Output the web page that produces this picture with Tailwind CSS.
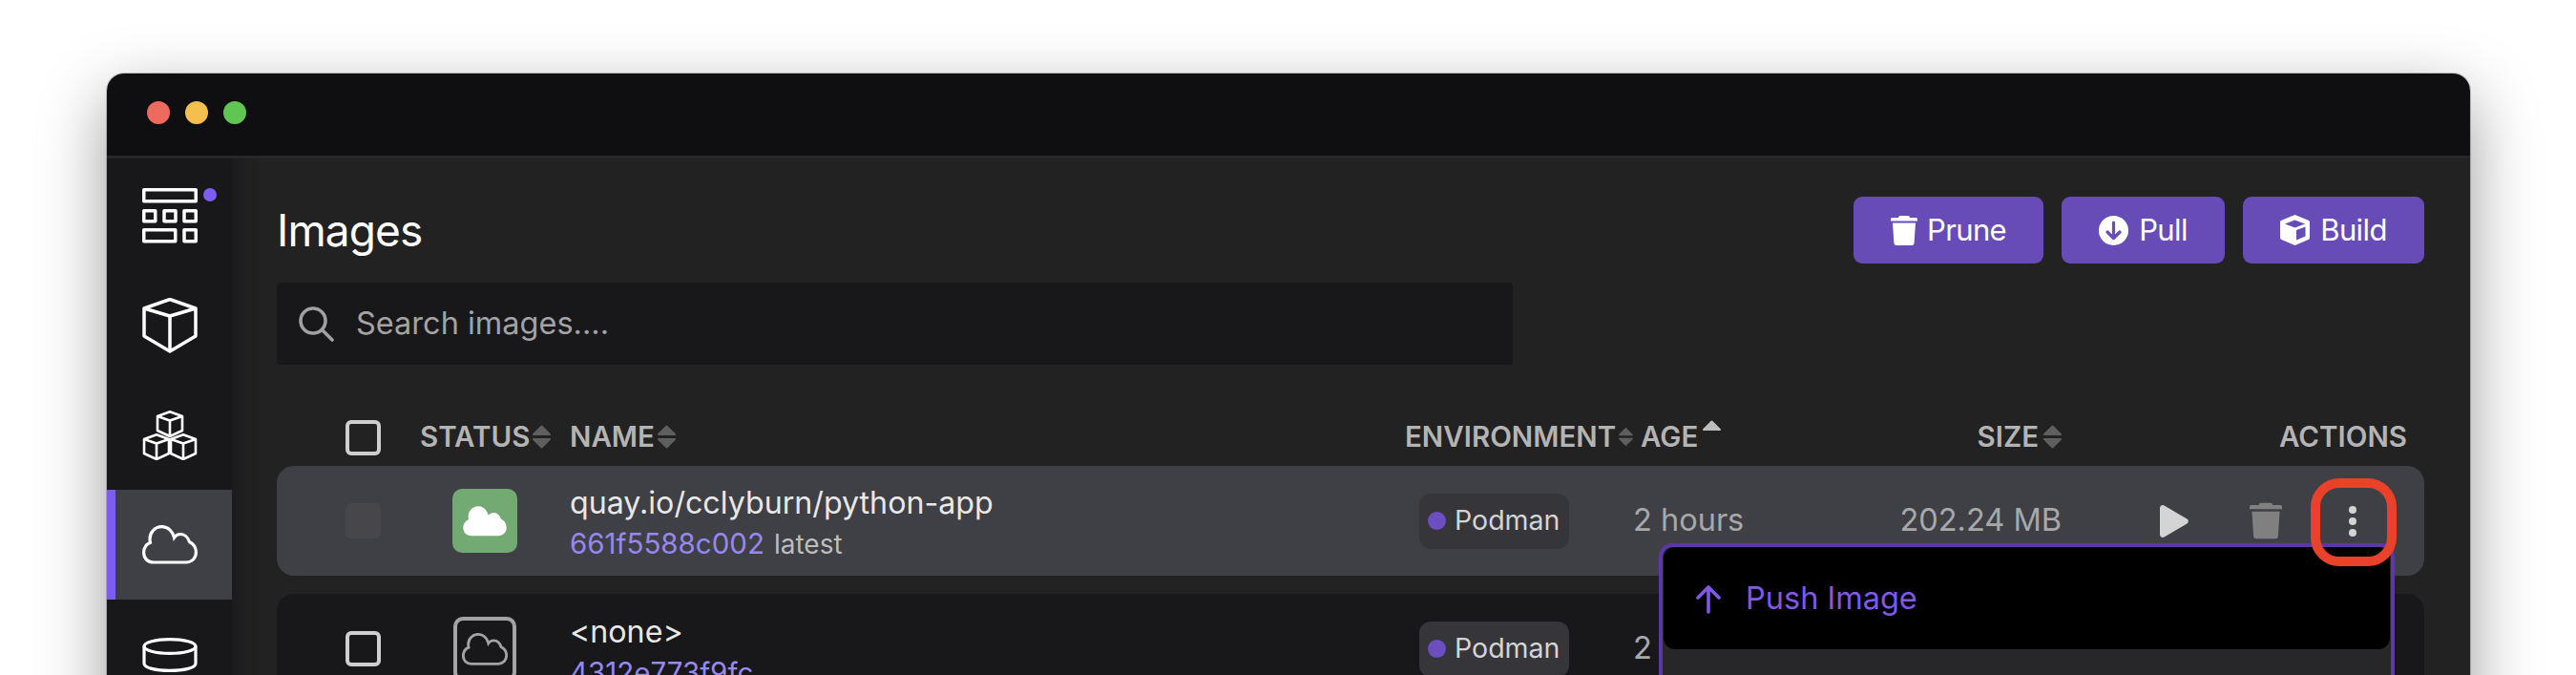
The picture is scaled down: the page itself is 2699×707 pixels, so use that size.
<!DOCTYPE html>
<html lang="en">

<head>
  <meta charset="UTF-8" />
  <title>Podman Desktop - Images</title>
  <script src="https://cdn.jsdelivr.net/npm/@tailwindcss/browser@4"></script>
</head>

<body class="bg-white h-screen overflow-hidden font-[Inter,sans-serif] pt-[77px] pl-[112px]">

  <!-- Window -->
  <div class="w-[2476px] h-[800px] rounded-t-[18px] overflow-hidden shadow-[0_0_0_1px_rgba(0,0,0,0.2),0_24px_70px_rgba(0,0,0,0.4)] flex flex-col">

    <!-- Title bar -->
    <div class="h-[89px] shrink-0 bg-[#0f0f11] border-b-[3px] border-[#27272a] flex items-center gap-[16px] pl-[42px] pb-[4px]">
      <span class="w-[24px] h-[24px] rounded-full bg-[#ee6a5f]"></span>
      <span class="w-[24px] h-[24px] rounded-full bg-[#f5bf4f]"></span>
      <span class="w-[24px] h-[24px] rounded-full bg-[#61c554]"></span>
    </div>

    <div class="flex flex-1">
      <!-- Sidebar -->
      <nav class="w-[131px] shrink-0 bg-[#18181b] flex flex-col pt-[2px]">
        <div class="relative h-[115px] flex items-center justify-center text-white">
          <svg width="58" height="58" viewBox="0 0 58 58" fill="none" stroke="currentColor" stroke-width="3.5" stroke-linejoin="round">
            <rect x="1.75" y="1.75" width="54.5" height="12" />
            <rect x="1.75" y="23.75" width="12" height="11" />
            <rect x="23" y="23.75" width="12" height="11" />
            <rect x="44" y="23.75" width="12.25" height="11" />
            <rect x="1.75" y="43.75" width="33" height="12" />
            <rect x="44" y="43.75" width="12.25" height="12" />
          </svg>
          <span class="absolute left-[101px] top-[29px] w-[14px] h-[14px] rounded-full bg-[#7d5cf0]"></span>
        </div>
        <div class="h-[115px] flex items-center justify-center text-white">
          <svg width="58" height="58" viewBox="0 0 58 58" fill="none" stroke="currentColor" stroke-width="3.5" stroke-linejoin="round">
            <path d="M29 1.500L56 11V40L29 56L2 40V11Z" />
            <path d="M2 11L29 19L56 11M29 19V56" />
          </svg>
        </div>
        <div class="h-[115px] flex items-center justify-center text-white">
          <svg width="58" height="52" viewBox="0 0 58 52" fill="none" stroke="currentColor" stroke-width="2.6" stroke-linejoin="round">
            <g transform="translate(15 0)"><path d="M14 1.300L27 6V21L14 27L1 21V6Z M1 6L14 10.500L27 6M14 10.500V27" /></g>
            <g transform="translate(1 24)"><path d="M14 1.300L27 6V21L14 27L1 21V6Z M1 6L14 10.500L27 6M14 10.500V27" /></g>
            <g transform="translate(29 24)"><path d="M14 1.300L27 6V21L14 27L1 21V6Z M1 6L14 10.500L27 6M14 10.500V27" /></g>
          </svg>
        </div>
        <div class="h-[115px] flex items-center justify-center text-white bg-[#3f3f46] border-l-[9px] border-[#7d5cf0] pr-[9px]">
          <svg width="58" height="41" viewBox="0 0 58 41" fill="none" stroke="currentColor" stroke-width="3.2">
            <path d="M12 39H46C52 39 56.400 34.500 56.400 28.500C56.400 23.500 53.500 19.500 49.500 17.500C48 12.500 44 9.500 40 9.500C37.500 9.500 35 10.800 33.500 13C32 6.500 27 1.600 20.500 1.600C13 1.600 8 8 8 14.500C8 15.800 8.200 17 8.500 18.200C4.300 20 1.600 24 1.600 28.800C1.600 35 6 39 12 39Z" />
          </svg>
        </div>
        <div class="h-[115px] flex items-start justify-center text-white pt-[40px]">
          <svg width="58" height="36" viewBox="0 0 58 36" fill="none" stroke="currentColor" stroke-width="3.2">
            <ellipse cx="29" cy="9" rx="27" ry="7.400" />
            <path d="M2 9V27C2 31.500 14 34.400 29 34.400S56 31.500 56 27V9" />
          </svg>
        </div>
      </nav>

      <!-- Main -->
      <main class="flex-1 bg-[linear-gradient(90deg,#1c1c1e_0,#222222_30px)] pl-[47px] pr-[48px] pt-[40px]">

        <!-- Heading and buttons -->
        <div class="flex items-center justify-between h-[70px]">
          <h1 class="text-[46px] tracking-[-0.02em] text-white leading-none">Images</h1>
          <div class="flex gap-[19px]">
            <button class="h-[70px] w-[199px] rounded-[9px] bg-[#674bb7] text-white text-[31px] tracking-[-0.02em] flex items-center justify-center gap-[10px]">
              <svg width="28" height="31" viewBox="0 0 28 31" fill="currentColor">
                <path d="M10 0H18A2 2 0 0 1 20 2H26.500A1.500 1.500 0 0 1 28 3.500V5.500H0V3.500A1.500 1.500 0 0 1 1.500 2H8A2 2 0 0 1 10 0Z" />
                <path d="M2 7.500H26L24.600 28.500A2.500 2.500 0 0 1 22 31H6A2.500 2.500 0 0 1 3.400 28.500Z" />
              </svg>
              Prune
            </button>
            <button class="h-[70px] w-[171px] rounded-[9px] bg-[#674bb7] text-white text-[31px] tracking-[-0.02em] flex items-center justify-center gap-[11px]">
              <svg width="31" height="31" viewBox="0 0 31 31">
                <circle cx="15.500" cy="15.500" r="15.500" fill="currentColor" />
                <path d="M15.500 7V23M9 17L15.500 23.500L22 17" fill="none" stroke="#674bb7" stroke-width="3.2" stroke-linecap="round" stroke-linejoin="round" />
              </svg>
              Pull
            </button>
            <button class="h-[70px] w-[190px] rounded-[9px] bg-[#674bb7] text-white text-[31px] tracking-[-0.02em] flex items-center justify-center gap-[11px]">
              <svg width="31" height="32" viewBox="0 0 31 32" fill="currentColor">
                <path d="M15.500 0L29 5.500A2.500 2.500 0 0 1 31 8V23.500A2.500 2.500 0 0 1 29.500 26L15.500 32L1.500 26A2.500 2.500 0 0 1 0 23.500V8A2.500 2.500 0 0 1 2 5.500Z" />
                <path d="M5 9.500L15.500 13.500L26 9.500L15.500 5.500Z" fill="#674bb7" />
                <path d="M17 16V26.500L26.500 22.500V12.500Z" fill="#674bb7" />
              </svg>
              Build
            </button>
          </div>
        </div>

        <!-- Search -->
        <div class="mt-[20px] w-[1295px] h-[86px] bg-[#18181b] rounded-[4px] flex items-center pl-[23px] gap-[23px]">
          <svg width="37" height="37" viewBox="0 0 37 37" fill="none" stroke="#a1a1a1" stroke-width="3.6" stroke-linecap="round">
            <circle cx="15" cy="15" r="13" />
            <path d="M24.500 24.500L35 35" />
          </svg>
          <span class="text-[32.5px] text-[#a3a3a3]">Search images....</span>
        </div>

        <!-- Table header -->
        <div class="mt-[53px] h-[37px] grid grid-cols-[150px_157px_875px_239px_269px_180px_380px] items-center text-[29.5px] font-semibold text-[#b4b4b4]">
          <div class="pl-[72px]"><span class="block w-[37px] h-[37px] rounded-[6px] border-[4px] border-[#cfcfcf]"></span></div>
          <div class="flex items-center gap-[3px] pb-[2px]">STATUS
            <svg width="19" height="25" viewBox="0 0 19 25" fill="#5f5f5f" stroke="#5f5f5f" stroke-width="2" stroke-linejoin="round"><path d="M9.500 1.500L18 10H1Z" /><path d="M1 15H18L9.500 23.500Z" /></svg>
          </div>
          <div class="flex items-center gap-[3px] pb-[2px]">NAME
            <svg width="19" height="25" viewBox="0 0 19 25" fill="#5f5f5f" stroke="#5f5f5f" stroke-width="2" stroke-linejoin="round"><path d="M9.500 1.500L18 10H1Z" /><path d="M1 15H18L9.500 23.500Z" /></svg>
          </div>
          <div class="flex items-center gap-[3px] pb-[2px]">ENVIRONMENT
            <svg width="19" height="25" viewBox="0 0 19 25" fill="#5f5f5f" stroke="#5f5f5f" stroke-width="2" stroke-linejoin="round"><path d="M9.500 1.500L18 10H1Z" /><path d="M1 15H18L9.500 23.500Z" /></svg>
          </div>
          <div class="flex items-center gap-[5px] pl-[8px] pb-[2px]">AGE
            <svg class="self-start mt-[5px]" width="19" height="11" viewBox="0 0 19 11" fill="#bdbdbd" stroke="#bdbdbd" stroke-width="2" stroke-linejoin="round"><path d="M9.500 1.500L18 10H1Z" /></svg>
          </div>
          <div class="flex items-center justify-end gap-[5px] pb-[2px]">SIZE
            <svg width="19" height="25" viewBox="0 0 19 25" fill="#5f5f5f" stroke="#5f5f5f" stroke-width="2" stroke-linejoin="round"><path d="M9.500 1.500L18 10H1Z" /><path d="M1 15H18L9.500 23.500Z" /></svg>
          </div>
          <div class="text-right pr-[18px] pb-[2px]">ACTIONS</div>
        </div>

        <!-- Row 1 -->
        <div class="relative z-10 mt-[16px] h-[115px] rounded-[18px] bg-[#3f3f46] grid grid-cols-[150px_157px_875px_239px_269px_180px_380px] items-center">
          <div class="pl-[72px]"><span class="block w-[37px] h-[37px] rounded-[6px] bg-[#47474b]"></span></div>
          <div class="pl-[34px]">
            <div class="w-[68px] h-[67px] rounded-[10px] bg-[#73a973] flex items-center justify-center">
              <svg width="48" height="34" viewBox="0 0 58 41" fill="#fff">
                <path d="M12 39H46C52 39 56.400 34.500 56.400 28.500C56.400 23.500 53.500 19.500 49.500 17.500C48 12.500 44 9.500 40 9.500C37.500 9.500 35 10.800 33.500 13C32 6.500 27 1.600 20.500 1.600C13 1.600 8 8 8 14.500C8 15.800 8.200 17 8.500 18.200C4.300 20 1.600 24 1.600 28.800C1.600 35 6 39 12 39Z" />
              </svg>
            </div>
          </div>
          <div class="pt-[6px]">
            <div class="text-[32.2px] leading-[42px] text-[#e8e8e8]">quay.io/cclyburn/python-app</div>
            <div class="text-[28px] leading-[42px] text-[#bdbdbd]"><span class="text-[29.5px] text-[#9688ee] mr-[10px]">661f5588c002</span>latest</div>
          </div>
          <div class="pl-[15px]">
            <div class="w-[157px] h-[58px] rounded-[12px] bg-[#35353a] flex items-center pl-[9px] gap-[9px] text-[28.5px] text-[#d4d4d4]">
              <span class="w-[19px] h-[19px] rounded-full bg-[#6b4fc0]"></span>Podman
            </div>
          </div>
          <div class="text-[32.5px] text-[#a8a8a8]">2 hours</div>
          <div class="text-[32.5px] text-[#a8a8a8] text-right whitespace-nowrap">202.24 MB</div>
          <div class="flex items-center pl-[103px]">
            <svg width="30" height="34" viewBox="0 0 30 34" fill="#d4d4d4"><path d="M0 3.500C0 .5 2.500-.8 5 .8L28 14.300C30.500 15.800 30.500 18.200 28 19.700L5 33.200C2.500 34.800 0 33.500 0 30.500Z" /></svg>
            <svg class="ml-[64px]" width="34" height="39" viewBox="0 0 28 31" fill="#808080">
              <path d="M10 0H18A2 2 0 0 1 20 2H26.500A1.500 1.500 0 0 1 28 3.500V5.500H0V3.500A1.500 1.500 0 0 1 1.500 2H8A2 2 0 0 1 10 0Z" />
              <path d="M2 7.500H26L24.600 28.500A2.500 2.500 0 0 1 22 31H6A2.500 2.500 0 0 1 3.400 28.500Z" />
            </svg>
            <svg class="ml-[70px]" width="8" height="32" viewBox="0 0 8 32" fill="#d4d4d4"><circle cx="4" cy="4" r="4" /><circle cx="4" cy="16" r="4" /><circle cx="4" cy="28" r="4" /></svg>
          </div>

          <!-- Kebab menu -->
          <div class="absolute left-[1448px] top-[81px] w-[771px] h-[300px] rounded-[14px] border-[4px] border-[#5c37a8] bg-[#27272a] z-10">
            <div class="mx-[1px] h-[107px] rounded-[12px] bg-black flex items-center pl-[34px] pt-[2px] gap-[26px] text-[32.5px] text-[#8058e8]">
              <svg width="26" height="30" viewBox="0 0 26 30" fill="none" stroke="currentColor" stroke-width="3.6" stroke-linecap="round" stroke-linejoin="round"><path d="M13 2V28M2 13L13 2L24 13" /></svg>
              Push Image
            </div>
          </div>

          <!-- Callout around the kebab button -->
          <div class="absolute left-[2131px] top-[13px] w-[90px] h-[92px] rounded-[30px] border-[10px] border-[#e9412a] z-20"></div>
        </div>

        <!-- Row 2 -->
        <div class="mt-[19px] h-[115px] rounded-[18px] bg-[#18181b] grid grid-cols-[150px_157px_875px_239px_269px_180px_380px] items-center">
          <div class="pl-[72px]"><span class="block w-[37px] h-[37px] rounded-[6px] border-[4px] border-[#cfcfcf]"></span></div>
          <div class="pl-[35px]">
            <div class="w-[66px] h-[68px] rounded-[10px] border-[4px] border-[#a3a3a3] flex items-center justify-center">
              <svg width="48" height="34" viewBox="0 0 58 41" fill="none" stroke="#a3a3a3" stroke-width="3.4">
                <path d="M12 39H46C52 39 56.400 34.500 56.400 28.500C56.400 23.500 53.500 19.500 49.500 17.500C48 12.500 44 9.500 40 9.500C37.500 9.500 35 10.800 33.500 13C32 6.500 27 1.600 20.500 1.600C13 1.600 8 8 8 14.500C8 15.800 8.200 17 8.500 18.200C4.300 20 1.600 24 1.600 28.800C1.600 35 6 39 12 39Z" />
              </svg>
            </div>
          </div>
          <div class="pt-[6px]">
            <div class="text-[32.2px] leading-[42px] text-[#e8e8e8]">&lt;none&gt;</div>
            <div class="text-[29.5px] leading-[42px] text-[#9688ee]">4312e773f9fc</div>
          </div>
          <div class="pl-[15px]">
            <div class="w-[157px] h-[58px] rounded-[12px] bg-[#35353a] flex items-center pl-[9px] gap-[9px] text-[28.5px] text-[#d4d4d4]">
              <span class="w-[19px] h-[19px] rounded-full bg-[#6b4fc0]"></span>Podman
            </div>
          </div>
          <div class="text-[32.5px] text-[#a8a8a8]">2 hours</div>
        </div>
      </main>
    </div>
  </div>

</body>

</html>
